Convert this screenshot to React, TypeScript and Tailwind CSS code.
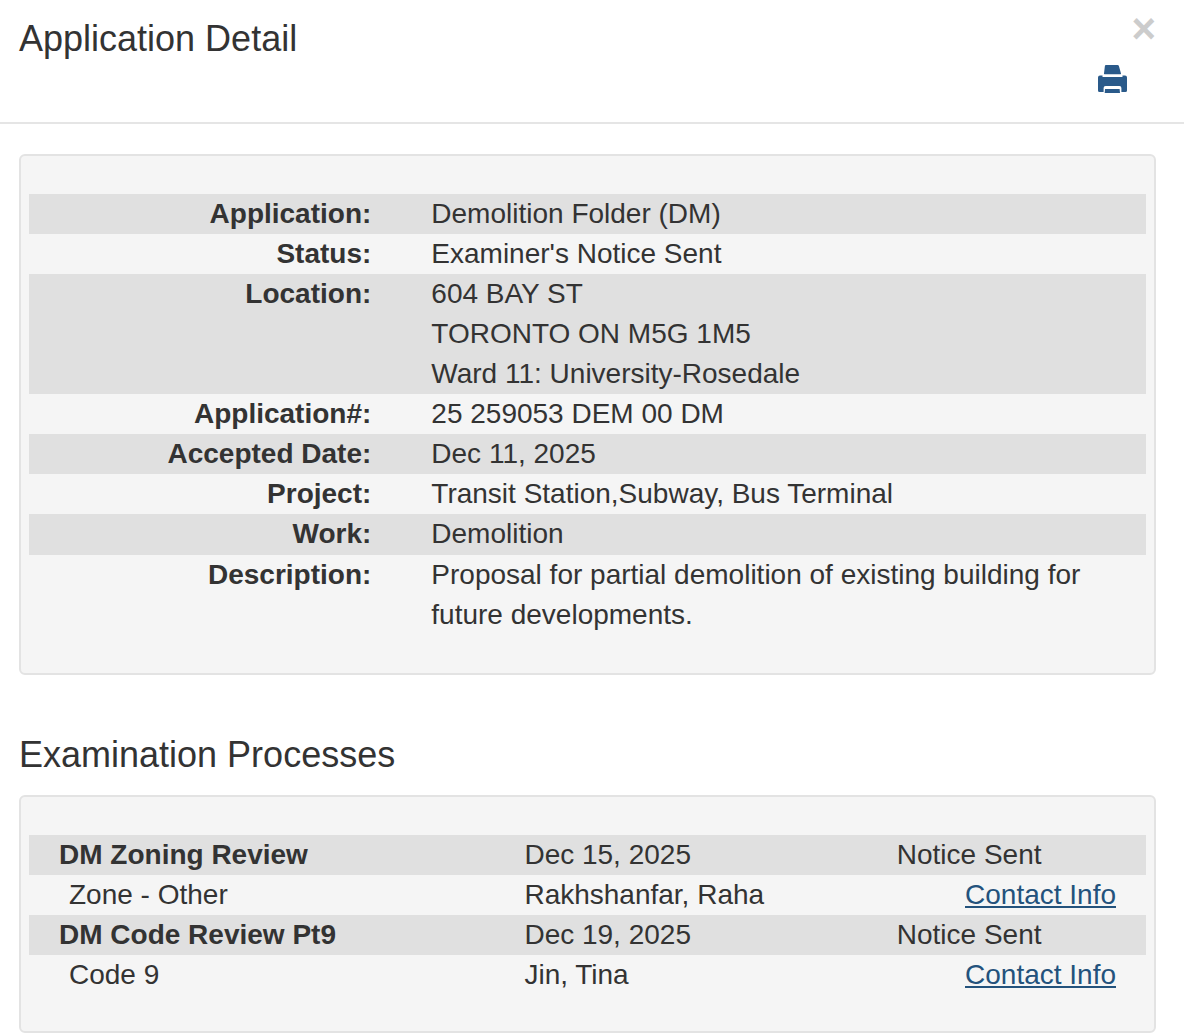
const details = [
  { label: "Application:", lines: ["Demolition Folder (DM)"] },
  { label: "Status:", lines: ["Examiner's Notice Sent"] },
  { label: "Location:", lines: ["604 BAY ST", "TORONTO ON M5G 1M5", "Ward 11: University-Rosedale"] },
  { label: "Application#:", lines: ["25 259053 DEM 00 DM"] },
  { label: "Accepted Date:", lines: ["Dec 11, 2025"] },
  { label: "Project:", lines: ["Transit Station,Subway, Bus Terminal"] },
  { label: "Work:", lines: ["Demolition"] },
  { label: "Description:", lines: ["Proposal for partial demolition of existing building for future developments."] },
];

const processes = [
  { name: "DM Zoning Review", date: "Dec 15, 2025", status: "Notice Sent", type: "Zone - Other", examiner: "Rakhshanfar, Raha" },
  { name: "DM Code Review Pt9", date: "Dec 19, 2025", status: "Notice Sent", type: "Code 9", examiner: "Jin, Tina" },
];

function PrintIcon() {
  return (
    <svg width="29" height="28" viewBox="0 0 29 28" fill="#2a5a8a">
      <path d="M8 0H19.5Q20.6 0 20.9 1L23 8.5Q23.2 9.3 22.5 9.3H6.5Q5.8 9.3 6 8.5L6.9 1Q7 0 8 0Z" />
      <path d="M2 10.5H4.6L4.4 11.3Q4.3 12 5 12H24Q24.7 12 24.6 11.3L24.4 10.5H27Q29 10.5 29 12.5V25.5Q29 27 27.5 27H23.4V23Q23.4 21 21.5 21H7.5Q5.6 21 5.6 23V27H1.5Q0 27 0 25.5V12.5Q0 10.5 2 10.5Z" />
      <path d="M7 23.9H21.6L22 28H6.7Z" />
    </svg>
  );
}

export default function App() {
  return (
    <div className="h-[1034px] overflow-hidden bg-white font-['Liberation_Sans',Arial,sans-serif] text-[28px] leading-[40.06px] text-[#333333]">
      <header className="flex h-[124px] justify-between border-b-2 border-[#e5e5e5] pr-7 pl-[19px]">
        <h1 className="pt-[19px] text-[36px] leading-[40px] font-normal">Application Detail</h1>
        <div className="flex flex-col items-end">
          <button className="mt-[6px] h-[45px] text-[42px] leading-[45px] font-bold text-[#cccccc]">×</button>
          <button className="mt-[14px] mr-[29px]">
            <PrintIcon />
          </button>
        </div>
      </header>

      <main className="pr-7 pl-[19px]">
        <section className="mt-[30px] h-[521px] rounded-md border-2 border-[#e3e3e3] bg-[#f5f5f5] px-2 pt-[37.95px]">
          {details.map((row, i) => (
            <div key={row.label} className={`grid grid-cols-12 ${i % 2 === 0 ? "bg-[#e0e0e0]" : ""}`}>
              <div className="col-span-4 px-[30px] text-right font-bold">{row.label}</div>
              <div className="col-span-8 px-[30px]">
                {row.lines.map((line) => (
                  <div key={line}>{line}</div>
                ))}
              </div>
            </div>
          ))}
        </section>

        <h2 className="mt-[60px] text-[36px] leading-[40px] font-normal">Examination Processes</h2>

        <section className="mt-[20px] h-[238px] rounded-md border-2 border-[#e3e3e3] bg-[#f5f5f5] px-2 pt-[38px]">
          {processes.map((p) => (
            <div key={p.name}>
              <div className="grid grid-cols-12 bg-[#e0e0e0]">
                <div className="col-span-5 px-[30px] font-bold">{p.name}</div>
                <div className="col-span-4 px-[30px]">{p.date}</div>
                <div className="col-span-3 px-[30px]">{p.status}</div>
              </div>
              <div className="grid grid-cols-12">
                <div className="col-span-5 pr-[30px] pl-10">{p.type}</div>
                <div className="col-span-4 px-[30px]">{p.examiner}</div>
                <div className="col-span-3 px-[30px] text-right">
                  <a href="#" className="text-[#23527c] underline">Contact Info</a>
                </div>
              </div>
            </div>
          ))}
        </section>
      </main>
    </div>
  );
}
